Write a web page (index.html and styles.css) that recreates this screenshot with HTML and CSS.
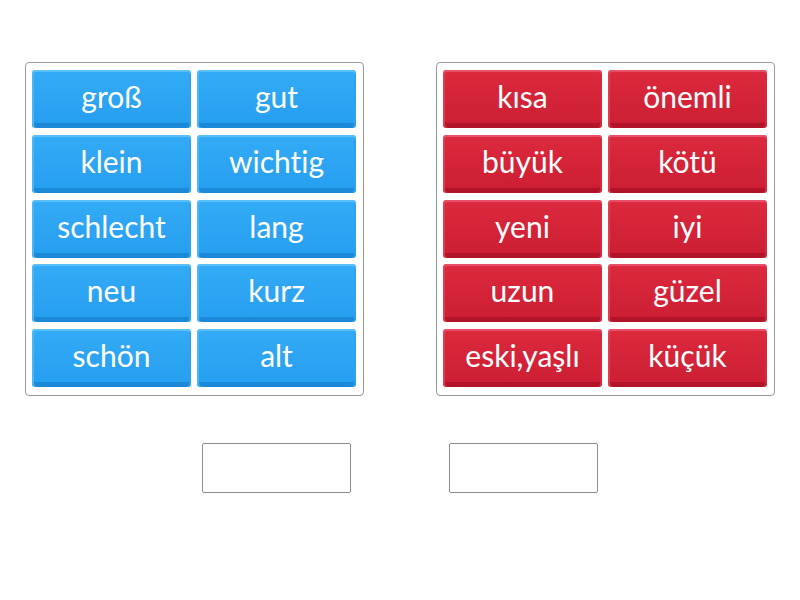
FILE: index.html
```html
<!DOCTYPE html>
<html>
<head>
<meta charset="utf-8">
<link rel="stylesheet" href="styles.css">
</head>
<body>
<div class="row">
  <div class="group">
    <div class="tile blue">groß</div>
    <div class="tile blue">gut</div>
    <div class="tile blue">klein</div>
    <div class="tile blue">wichtig</div>
    <div class="tile blue">schlecht</div>
    <div class="tile blue">lang</div>
    <div class="tile blue">neu</div>
    <div class="tile blue">kurz</div>
    <div class="tile blue">schön</div>
    <div class="tile blue">alt</div>
  </div>
  <div class="group">
    <div class="tile red">kısa</div>
    <div class="tile red">önemli</div>
    <div class="tile red">büyük</div>
    <div class="tile red">kötü</div>
    <div class="tile red">yeni</div>
    <div class="tile red">iyi</div>
    <div class="tile red">uzun</div>
    <div class="tile red">güzel</div>
    <div class="tile red">eski,yaşlı</div>
    <div class="tile red">küçük</div>
  </div>
</div>
<div class="slots">
  <div class="slot"></div>
  <div class="slot"></div>
</div>
</body>
</html>
```
FILE: styles.css
```css
html, body {
  margin: 0;
  padding: 0;
  background: #fff;
  width: 800px;
  height: 600px;
  overflow: hidden;
}
body {
  padding: 62px 0 0 25px;
  box-sizing: border-box;
  font-family: Lato, "Open Sans", sans-serif;
}
.row {
  display: flex;
  gap: 72px;
}
.group {
  width: 339px;
  height: 334px;
  box-sizing: border-box;
  border: 1px solid #9a9a9a;
  border-radius: 4px;
  padding: 7px 7px 7px 6px;
  display: grid;
  grid-template-columns: 159px 159px;
  grid-auto-rows: 58px;
  column-gap: 6px;
  row-gap: 6.75px;
}
.tile {
  border-radius: 4px;
  display: flex;
  align-items: center;
  justify-content: center;
  color: #fff;
  font-size: 30px;
  font-weight: 400;
  font-variant-ligatures: none;
  padding-bottom: 6px;
  box-sizing: border-box;
}
.blue {
  background: linear-gradient(#33abf5, #269ef0);
  box-shadow: inset 0 2px 0 #5cc0f8, inset 2px 0 0 #4ab7f7, inset -2px 0 0 #2fa2ea, inset 0 -5px 0 #1b88d8;
}
.red {
  background: linear-gradient(#dc2a3e, #cc1d32);
  box-shadow: inset 0 2px 0 #e8506a, inset 2px 0 0 #e23c50, inset -2px 0 0 #d42a3d, inset 0 -5px 0 #b11428;
}
.slots {
  display: flex;
  gap: 98px;
  margin: 47px 0 0 177px;
}
.slot {
  width: 149px;
  height: 50px;
  box-sizing: border-box;
  border: 1px solid #8e8e8e;
  border-radius: 2px;
  background: #fff;
}
```
